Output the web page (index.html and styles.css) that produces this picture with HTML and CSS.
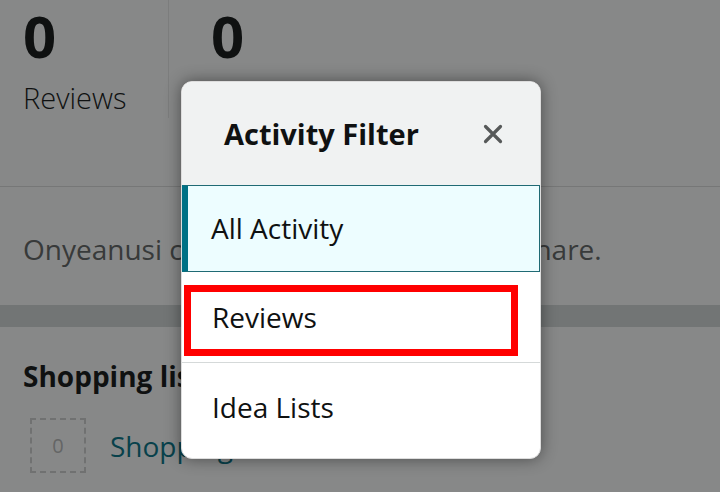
FILE: index.html
```html
<!DOCTYPE html>
<html lang="en">
<head>
  <meta charset="UTF-8" />
  <title>Profile Activity</title>
  <meta name="viewport" content="width=device-width, initial-scale=1.0" />
  <link rel="stylesheet" href="styles.css">
</head>
<body>

  <!-- Profile page behind the filter sheet -->
  <div class="page">
    <div class="stats">
      <div class="stat stat-first">
        <div class="stat-num">0</div>
        <div class="stat-label">Reviews</div>
      </div>
      <div class="stat">
        <div class="stat-num">0</div>
        <div class="stat-label">Idea Lists</div>
      </div>
    </div>

    <div class="bio">
      <p>Onyeanusi currently has no activity to share.</p>
    </div>

    <div class="band"></div>

    <div class="lists">
      <h3>Shopping lists</h3>
      <div class="list-item">
        <div class="list-thumb">0</div>
        <a class="list-link" href="#">Shopping List</a>
      </div>
    </div>
  </div>

  <!-- Dim layer + filter sheet -->
  <div class="overlay"></div>

  <div class="modal">
    <div class="modal-head">
      <h2>Activity Filter</h2>
      <button class="close-btn" aria-label="Close">
        <svg width="20" height="20" viewBox="0 0 20 20">
          <path d="M2.5 2.5 L17.5 17.5 M17.5 2.5 L2.5 17.5" stroke="#565959" stroke-width="3.2" stroke-linecap="round" fill="none"/>
        </svg>
      </button>
    </div>
    <div class="filter-item active">All Activity</div>
    <div class="filter-item marked">
      <div class="highlight">Reviews</div>
    </div>
    <div class="filter-item">Idea Lists</div>
  </div>

</body>
</html>
```

FILE: styles.css
```css
* {
  box-sizing: border-box;
  margin: 0;
  padding: 0;
  font-family: 'Open Sans', 'Noto Sans', sans-serif;
}

body {
  width: 720px;
  height: 492px;
  overflow: hidden;
  background: #ffffff;
  color: #0f1111;
  position: relative;
}

/* stats row */
.stats {
  display: flex;
  border-bottom: 1px solid #dddddd;
  padding-bottom: 68px;
}

.stat {
  padding-left: 23px;
  height: 118px;
}

.stat-first {
  width: 169px;
  border-right: 1px solid #e8e8e8;
}

.stat + .stat {
  padding-left: 42px;
}

.stat-num {
  font-size: 58px;
  font-weight: 700;
  line-height: 72px;
}

.stat-label {
  font-size: 29px;
  font-weight: 300;
  line-height: 36px;
  margin-top: 8px;
}

.bio {
  padding: 44px 23px 38px;
}

.bio p {
  font-size: 28px;
  line-height: 36px;
  color: #606363;
  white-space: nowrap;
}

.band {
  height: 22px;
  background: #d5d9d9;
}

.lists {
  padding: 31px 23px 0;
}

.lists h3 {
  font-size: 28px;
  font-weight: 700;
  line-height: 36px;
}

.list-item {
  display: flex;
  align-items: center;
  gap: 24px;
  margin-top: 24px;
  padding-left: 7px;
}

.list-thumb {
  width: 56px;
  height: 55px;
  border: 2px dashed #d0d0d0;
  display: flex;
  align-items: center;
  justify-content: center;
  font-size: 20px;
  color: #b8b8b8;
}

.list-link {
  font-size: 28px;
  color: #007185;
  text-decoration: none;
}

/* dim layer */
.overlay {
  position: absolute;
  inset: 0;
  background: rgba(16, 17, 17, 0.5);
}

/* filter sheet */
.modal {
  position: absolute;
  left: 181px;
  top: 81px;
  width: 360px;
  height: 378px;
  background: #ffffff;
  border: 1px solid #dddddd;
  border-radius: 11px;
  overflow: hidden;
  box-shadow: 0 0 16px rgba(0, 0, 0, 0.45);
}

.modal-head {
  height: 103px;
  background: #f0f2f2;
  display: flex;
  align-items: center;
  justify-content: space-between;
  padding: 0 37px 0 42px;
}

.modal-head h2 {
  font-size: 29px;
  font-weight: 700;
  color: #0f1111;
}

.close-btn {
  border: none;
  background: none;
  display: flex;
  cursor: pointer;
}

.filter-item {
  font-size: 28px;
  line-height: 36px;
  color: #0f1111;
  padding: 25px 30px;
}

.filter-item.active {
  height: 87px;
  background: #edfdff;
  border: 1px solid #1f6a74;
  border-left: 6px solid #007185;
  padding-left: 23px;
  padding-top: 24px;
}

.filter-item.marked {
  height: 91px;
  padding: 13px 22px 0 2px;
  border-bottom: 1px solid #d5d9d9;
}

.highlight {
  height: 71px;
  border: 7px solid #ff0000;
  padding: 7px 0 0 21px;
}

.filter-item.marked + .filter-item {
  padding-top: 26px;
}
```
